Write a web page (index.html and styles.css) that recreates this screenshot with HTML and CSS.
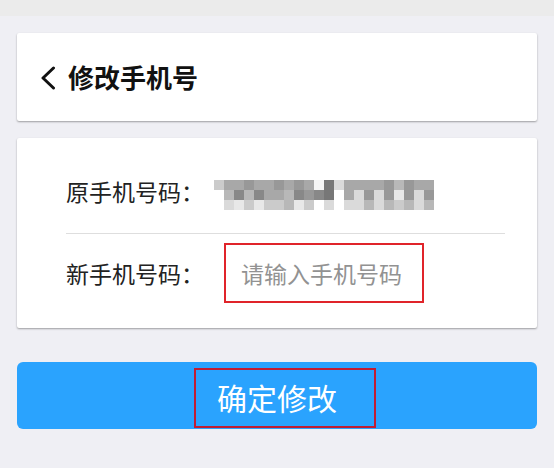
FILE: index.html
```html
<!DOCTYPE html>
<html lang="zh-CN">
<head>
    <meta charset="UTF-8">
    <meta name="viewport" content="width=device-width, initial-scale=1.0">
    <link rel="stylesheet" href="styles.css">
    <title>修改手机号</title>
</head>
<body>
    <div class="status-bar"></div>
    <div class="page">
        <div class="card header">
            <svg class="back" width="16" height="24" viewBox="0 0 16 24">
                <polyline points="13.5,2 3,12 13.5,22" fill="none" stroke="#111" stroke-width="3" stroke-linecap="round" stroke-linejoin="round"/>
            </svg>
            <h3 class="title">修改手机号</h3>
        </div>

        <div class="card form">
            <div class="row row-old">
                <span class="label">原手机号码：</span>
                <!-- blurred number -->
                <div class="mosaic">
                    <span class="sc"></span><span class="sa"></span><span class="sa"></span><span class="s9"></span><span class="sa"></span><span class="sa"></span><span class="s9"></span><span class="sa"></span><span class="s9"></span><span class="sa"></span><span class="sf"></span><span class="s7"></span><span class="sd"></span><span class="sa"></span><span class="sa"></span><span class="sa"></span><span class="sa"></span><span class="s9"></span><span class="sb"></span><span class="s9"></span><span class="sa"></span><span class="sa"></span>
                    <span class="sw"></span><span class="sb"></span><span class="s8"></span><span class="sb"></span><span class="s8"></span><span class="sa"></span><span class="sa"></span><span class="sb"></span><span class="s8"></span><span class="s9"></span><span class="s8"></span><span class="s7"></span><span class="sw"></span><span class="sa"></span><span class="sd"></span><span class="s9"></span><span class="sd"></span><span class="s9"></span><span class="se"></span><span class="s9"></span><span class="sd"></span><span class="s9"></span>
                    <span class="sw"></span><span class="sd"></span><span class="se"></span><span class="sc"></span><span class="se"></span><span class="sc"></span><span class="sc"></span><span class="sb"></span><span class="se"></span><span class="sc"></span><span class="sw"></span><span class="sd"></span><span class="sw"></span><span class="sd"></span><span class="sd"></span><span class="sb"></span><span class="sd"></span><span class="sb"></span><span class="sc"></span><span class="sb"></span><span class="sd"></span><span class="sb"></span>
                </div>
            </div>
            <div class="row row-new">
                <label class="label" for="phone">新手机号码：</label>
                <div class="input-box">
                    <input type="text" id="phone" placeholder="请输入手机号码">
                </div>
            </div>
        </div>

        <div class="submit">
            <span class="submit-text">确定修改</span>
        </div>
    </div>
</body>
</html>
```

FILE: styles.css
```css
*{
    box-sizing: border-box;
}
body{
    margin: 0;
    font-family: "Noto Sans CJK SC", "Noto Sans", sans-serif;
    background-color: #efeff4;
    color: #222;
}
.status-bar{
    height: 16px;
    background-color: #ebebeb;
}
.page{
    padding: 17px 17px 0;
}
.card{
    background-color: #fff;
    border-radius: 2px;
    box-shadow: 0 1px 2px rgba(0, 0, 0, 0.35);
}

/* header */
.header{
    height: 88px;
    display: flex;
    align-items: center;
    padding-left: 23px;
}
.back{
    display: block;
    margin-top: 2px;
}
.title{
    margin: 0 0 0 12px;
    font-size: 26px;
    line-height: 30px;
    font-weight: 700;
    color: #111;
}

/* form */
.form{
    margin-top: 17px;
    padding: 0 32px 0 49px;
}
.row{
    display: flex;
    align-items: flex-start;
}
.label{
    font-size: 23px;
    line-height: 30px;
    width: 148px;
    flex-shrink: 0;
    color: #222;
}
.row-old{
    height: 95px;
    padding-top: 38px;
}
.mosaic{
    margin-top: 4px;
    display: grid;
    grid-template-columns: repeat(22, 10px);
    grid-auto-rows: 10px;
    filter: blur(0.7px);
}
.sw{ background: #fff; }
.sf{ background: #f4f4f4; }
.se{ background: #e8e8e8; }
.sd{ background: #dadada; }
.sc{ background: #cbcbcb; }
.sb{ background: #b8b8b8; }
.sa{ background: #a8a8a8; }
.s9{ background: #989898; }
.s8{ background: #888; }
.s7{ background: #777; }

.row-new{
    height: 95px;
    border-top: 1px solid #dedede;
    padding-top: 9px;
    align-items: center;
    padding-bottom: 25px;
}
.row-new .label{
    width: 158px;
}
.input-box{
    width: 200px;
    height: 60px;
    border: 2px solid #e0242a;
    display: flex;
    align-items: center;
    padding-left: 15px;
}
.input-box input{
    width: 100%;
    border: none;
    outline: none;
    padding: 0;
    font-family: inherit;
    font-size: 23px;
    color: #222;
    background: transparent;
}
.input-box input::placeholder{
    color: #929292;
}

/* button */
.submit{
    margin-top: 34px;
    height: 67px;
    background-color: #2aa3fe;
    border-radius: 6px;
    display: flex;
    justify-content: center;
    align-items: flex-end;
    padding-bottom: 1px;
}
.submit-text{
    height: 60px;
    display: flex;
    align-items: center;
    padding: 0 37px 2px 21px;
    margin-left: 16px;
    border: 2px solid #c01d33;
    color: #fff;
    font-size: 30px;
}
```
